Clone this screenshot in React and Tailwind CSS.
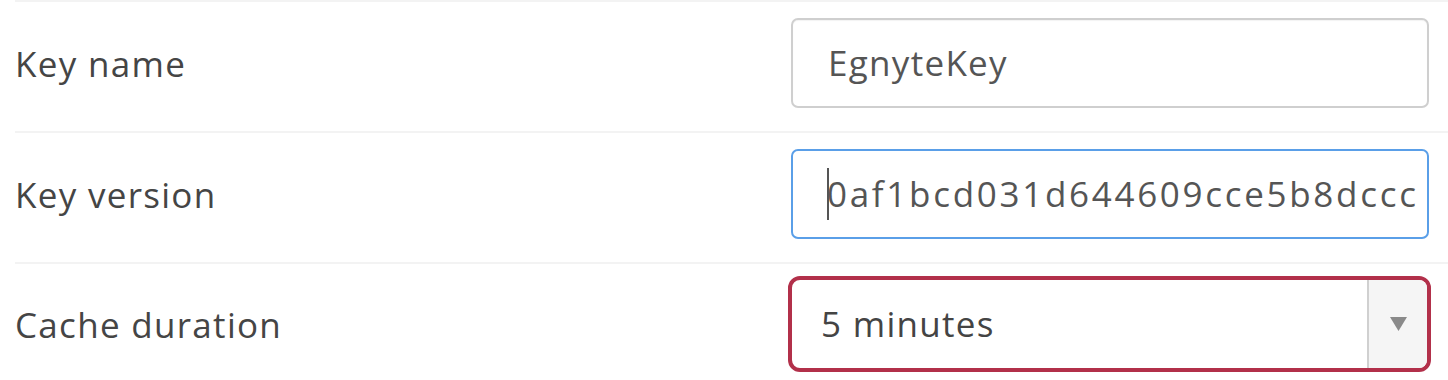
import { useState } from "react";

const labelCls =
  "text-[35px] tracking-[1.3px] text-[#454545] leading-none";

const Row = ({ label, children, last }) => {
  return (
    <div
      className={`flex items-center justify-between border-t-2 border-[#f3f3f3] pr-[19px] ${
        last ? "pt-[12px] pb-[16px]" : "pt-[16px] pb-[23px]"
      }`}
    >
      <div className={labelCls}>{label}</div>
      {children}
    </div>
  );
};

const App = () => {
  const [duration] = useState("5 minutes");

  return (
    <div
      className="bg-white h-[380px] overflow-hidden pl-[15px]"
      style={{ fontFamily: '"Open Sans", "Noto Sans", sans-serif' }}
    >
      <Row label="Key name">
        <div className="w-[638px] h-[90px] rounded-[7px] border-2 border-[#cfcfcf] bg-white flex items-center pl-[35px] pr-[12px] shadow-[inset_0_1px_1px_rgba(0,0,0,0.05)]">
          <span className="text-[35px] tracking-[1.3px] text-[#555]">
            EgnyteKey
          </span>
        </div>
      </Row>

      <Row label="Key version">
        <div className="w-[638px] h-[90px] rounded-[7px] border-2 border-[#5a9fe8] bg-white flex items-center pl-[34px] pr-[10px] overflow-hidden">
          <div className="flex items-center whitespace-nowrap overflow-hidden">
            <span className="inline-block w-[2px] h-[52px] bg-[#555] -mr-[2px] shrink-0" />
            <span className="text-[35px] tracking-[2.7px] text-[#555]">
              0af1bcd031d644609cce5b8dccc1a7e2
            </span>
          </div>
        </div>
      </Row>

      <Row label="Cache duration" last>
        <div className="w-[643px] h-[96px] -mr-[2px] rounded-[12px] border-4 border-[#b2304a] bg-white flex items-stretch overflow-hidden">
          <div className="flex-1 flex items-center pl-[29px]">
            <span className="text-[35px] tracking-[1.3px] text-[#444]">
              {duration}
            </span>
          </div>
          <div className="w-[60px] border-l-2 border-[#d0d0d0] bg-[#f5f5f5] flex items-center justify-center">
            <svg width="17" height="14" viewBox="0 0 17 14">
              <path d="M0 0 H17 L8.5 14 Z" fill="#8a8a8a" />
            </svg>
          </div>
        </div>
      </Row>
    </div>
  );
};

export default App;
